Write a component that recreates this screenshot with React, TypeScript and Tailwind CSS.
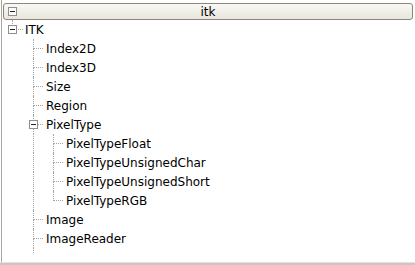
import React from "react";

type RowProps = {
  level: number;
  guides: boolean[];
  last: boolean;
  expander?: boolean;
  label: string;
};

const cellW = [21, 20, 20];

function Cell({
  width,
  children,
}: {
  width: number;
  children?: React.ReactNode;
}) {
  return (
    <div className="relative h-full shrink-0" style={{ width }}>
      {children}
    </div>
  );
}

function Row({ level, guides, last, expander, label }: RowProps) {
  const cells: React.ReactNode[] = [];
  for (let i = 0; i < level; i++) {
    cells.push(
      <Cell key={i} width={cellW[i]}>
        {guides[i] && (
          <div className="absolute left-[10px] top-0 bottom-0 border-l border-dotted border-[#a3a3a3]" />
        )}
      </Cell>
    );
  }
  cells.push(
    <Cell key="own" width={cellW[level]}>
      <div className="absolute left-[10px] top-0 h-[10px] border-l border-dotted border-[#a3a3a3]" />
      {!last && (
        <div className="absolute left-[10px] top-[10px] bottom-0 border-l border-dotted border-[#a3a3a3]" />
      )}
      <div className="absolute left-[11px] right-0 top-[9px] border-t border-dotted border-[#a3a3a3]" />
      {expander && (
        <div className="absolute left-[6px] top-[5px] w-[9px] h-[9px] border border-[#8f8f8f] bg-white flex items-center justify-center">
          <div className="w-[5px] h-px bg-[#202020]" />
        </div>
      )}
    </Cell>
  );
  return (
    <div className="flex h-[19px] items-center">
      {cells}
      <span className={level === 0 ? "ml-[2px]" : "ml-[3px]"}>{label}</span>
    </div>
  );
}

export default function App() {
  return (
    <div
      className="w-[415px] h-[265px] bg-white flex flex-col text-[12px] text-black"
      style={{ fontFamily: '"DejaVu Sans", sans-serif' }}
    >
      <div className="flex-1 flex flex-col border-l border-[#aaa69d] ml-px">
        <div className="mt-[3px] ml-px mr-[2px] h-[17px] rounded-[3px] border border-[#8c877b] bg-gradient-to-b from-[#f9f8f4] to-[#e9e6de] flex items-center relative">
          <div className="absolute left-[4px] top-[3px] w-[9px] h-[9px] border border-[#8f8f8f] bg-white flex items-center justify-center">
            <div className="w-[5px] h-px bg-[#202020]" />
          </div>
          <div className="flex-1 text-center leading-none pt-px">itk</div>
        </div>
        <div className="flex flex-col">
          <Row level={0} guides={[]} last expander label="ITK" />
          <Row level={1} guides={[false]} last={false} label="Index2D" />
          <Row level={1} guides={[false]} last={false} label="Index3D" />
          <Row level={1} guides={[false]} last={false} label="Size" />
          <Row level={1} guides={[false]} last={false} label="Region" />
          <Row level={1} guides={[false]} last={false} expander label="PixelType" />
          <Row level={2} guides={[false, true]} last={false} label="PixelTypeFloat" />
          <Row level={2} guides={[false, true]} last={false} label="PixelTypeUnsignedChar" />
          <Row level={2} guides={[false, true]} last={false} label="PixelTypeUnsignedShort" />
          <Row level={2} guides={[false, true]} last label="PixelTypeRGB" />
          <Row level={1} guides={[false]} last={false} label="Image" />
          <Row level={1} guides={[false]} last={false} label="ImageReader" />
          <div className="flex h-[5px]">
            <Cell width={21} />
            <Cell width={20}>
              <div className="absolute left-[10px] top-0 bottom-0 border-l border-dotted border-[#a3a3a3]" />
            </Cell>
          </div>
        </div>
      </div>
      <div className="h-[3px] border-t border-[#e4e1da] bg-[#cbc7be]" />
    </div>
  );
}
